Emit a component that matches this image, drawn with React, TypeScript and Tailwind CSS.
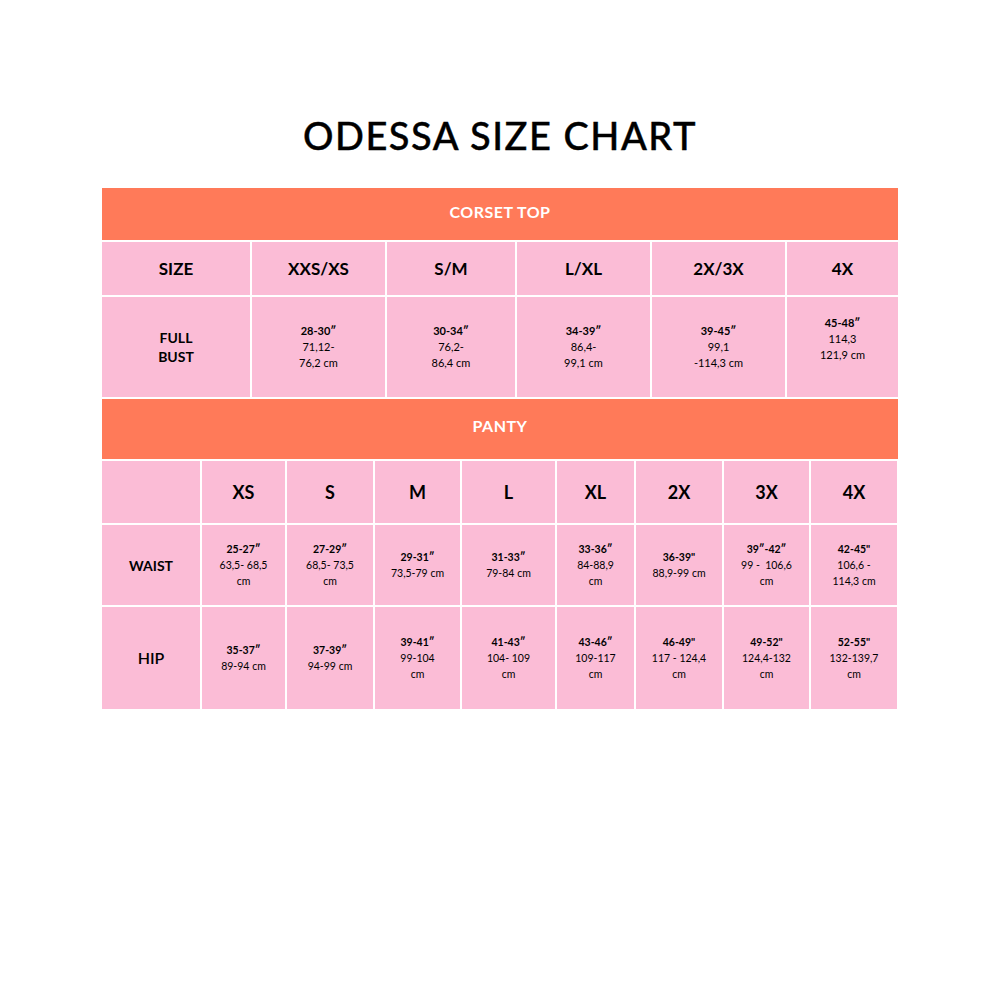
const font = { fontFamily: "Lato, 'Noto Sans', sans-serif" };

type Cell = { b: string; lines: string[]; lift?: boolean };

const corsetSizes = ["XXS/XS", "S/M", "L/XL", "2X/3X", "4X"];
const corsetBust: Cell[] = [
  { b: "28-30″", lines: ["71,12-", "76,2 cm"] },
  { b: "30-34″", lines: ["76,2-", "86,4 cm"] },
  { b: "34-39″", lines: ["86,4-", "99,1 cm"] },
  { b: "39-45″", lines: ["99,1", "-114,3 cm"] },
  { b: "45-48″", lines: ["114,3", "121,9 cm"], lift: true },
];

const pantySizes = ["XS", "S", "M", "L", "XL", "2X", "3X", "4X"];
const waist: Cell[] = [
  { b: "25-27″", lines: ["63,5- 68,5", "cm"] },
  { b: "27-29″", lines: ["68,5- 73,5", "cm"] },
  { b: "29-31″", lines: ["73,5-79 cm"] },
  { b: "31-33″", lines: ["79-84 cm"] },
  { b: "33-36″", lines: ["84-88,9", "cm"] },
  { b: "36-39\"", lines: ["88,9-99 cm"] },
  { b: "39″-42″", lines: ["99 -  106,6", "cm"] },
  { b: "42-45\"", lines: ["106,6 -", "114,3 cm"] },
];
const hip: Cell[] = [
  { b: "35-37″", lines: ["89-94 cm"] },
  { b: "37-39″", lines: ["94-99 cm"] },
  { b: "39-41″", lines: ["99-104", "cm"] },
  { b: "41-43″", lines: ["104- 109", "cm"] },
  { b: "43-46″", lines: ["109-117", "cm"] },
  { b: "46-49\"", lines: ["117 - 124,4", "cm"] },
  { b: "49-52\"", lines: ["124,4-132", "cm"] },
  { b: "52-55\"", lines: ["132-139,7", "cm"] },
];

function Value({ cell, small }: { cell: Cell; small?: boolean }) {
  return (
    <div className="bg-[#fbbcd6] flex items-center justify-center text-center text-black">
      <div className={`${small ? "text-[10.5px] leading-[16px]" : "text-[11px] leading-[16px]"} ${cell.lift ? "mb-[16px]" : ""}`}>
        <div className="font-bold">{cell.b}</div>
        {cell.lines.map((l, i) => (
          <div key={i} className="whitespace-pre">{l}</div>
        ))}
      </div>
    </div>
  );
}

export default function App() {
  return (
    <div className="w-[1000px] h-[1000px] bg-white" style={font}>
      <h1 className="pt-[113px] text-center text-[38px] leading-[44px] tracking-[0.04em] text-black font-medium [-webkit-text-stroke:0.4px_black]">
        ODESSA SIZE CHART
      </h1>

      <div className="mt-[31px] w-[796px] mx-auto flex flex-col gap-[2px] bg-white">
        <div className="h-[52px] pb-[4px] bg-[#ff7a59] flex items-center justify-center text-white font-bold text-[16px] tracking-[0.03em]">
          CORSET TOP
        </div>

        <div className="grid grid-cols-[148px_133px_128px_133px_133px_111px] grid-rows-[53px_100px] gap-[2px]">
          <div className="bg-[#fbbcd6] flex items-center justify-center font-bold text-[17px] text-black">SIZE</div>
          {corsetSizes.map((s) => (
            <div key={s} className="bg-[#fbbcd6] flex items-center justify-center font-bold text-[17px] text-black">
              {s}
            </div>
          ))}
          <div className="bg-[#fbbcd6] flex items-center justify-center text-center font-bold text-[14px] leading-[19px] text-black">
            FULL<br />BUST
          </div>
          {corsetBust.map((c) => (
            <Value key={c.b} cell={c} />
          ))}
        </div>

        <div className="h-[60px] pb-[6px] bg-[#ff7a59] flex items-center justify-center text-white font-bold text-[16px] tracking-[0.03em]">
          PANTY
        </div>

        <div className="grid grid-cols-[98px_83px_86px_85px_93px_77px_86px_85px_86px] grid-rows-[62px_80px_102px] gap-[2px]">
          <div className="bg-[#fbbcd6]" />
          {pantySizes.map((s) => (
            <div key={s} className="bg-[#fbbcd6] flex items-center justify-center font-bold text-[18px] text-black">
              {s}
            </div>
          ))}
          <div className="bg-[#fbbcd6] flex items-center justify-center font-bold text-[14px] text-black">WAIST</div>
          {waist.map((c) => (
            <Value key={c.b} cell={c} small />
          ))}
          <div className="bg-[#fbbcd6] flex items-center justify-center font-semibold text-[16px] text-black">HIP</div>
          {hip.map((c) => (
            <Value key={c.b} cell={c} small />
          ))}
        </div>
      </div>
    </div>
  );
}
